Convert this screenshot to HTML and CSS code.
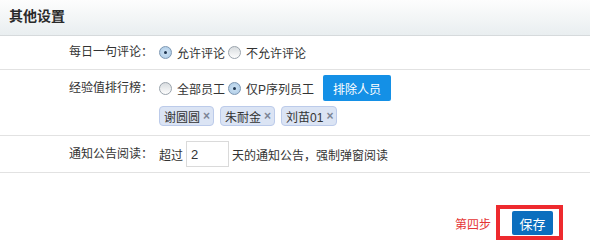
FILE: index.html
```html
<!DOCTYPE html>
<html>
<head>
    <title>其他设置</title>
    <link rel="stylesheet" href="styles.css">
</head>
<body>
    <div class="panel">
        <div class="panel-head">其他设置</div>

        <div class="row row-first">
            <div class="label">每日一句评论：</div>
            <div class="field">
                <div class="line">
                    <span class="radio on"></span><span class="opt">允许评论</span>
                    <span class="radio"></span><span class="opt">不允许评论</span>
                </div>
            </div>
        </div>

        <div class="row row-rank">
            <div class="label">经验值排行榜：</div>
            <div class="field">
                <div class="line">
                    <span class="radio"></span><span class="opt">全部员工</span>
                    <span class="radio on"></span><span class="opt">仅P序列员工</span>
                    <button class="btn-blue" type="button">排除人员</button>
                </div>
                <div class="tags">
                    <span class="tag">谢圆圆<span class="tag-x">×</span></span>
                    <span class="tag">朱耐金<span class="tag-x">×</span></span>
                    <span class="tag">刘苗01<span class="tag-x">×</span></span>
                </div>
            </div>
        </div>

        <div class="row">
            <div class="label">通知公告阅读：</div>
            <div class="field">
                <div class="line">
                    <span class="txt">超过</span>
                    <input class="days" type="text" value="2">
                    <span class="txt">天的通知公告，强制弹窗阅读</span>
                </div>
            </div>
        </div>

        <div class="footer">
            <span class="step">第四步</span>
            <div class="save-wrap">
                <button class="btn-save" type="button">保存</button>
                <div class="mark"></div>
            </div>
        </div>
    </div>
</body>
</html>
```

FILE: styles.css
```css
body {
    margin: 0;
    font-family: "Liberation Sans", "Noto Sans CJK SC", sans-serif;
    font-size: 12px;
    color: #333;
    background: #fff;
}
.panel {
    width: 590px;
}
.panel-head {
    height: 35px;
    line-height: 32px;
    padding-left: 9px;
    font-size: 14px;
    font-weight: bold;
    color: #2a2a2a;
    background: linear-gradient(#fdfdfd, #e9eef0);
    border-bottom: 1px solid #d6dadc;
}
.row {
    display: flex;
    padding: 5px 0;
    border-bottom: 1px solid #e2e2e2;
}
.row-first {
    padding: 3px 0 4px 0;
}
.row-rank {
    padding: 5px 0 9px 0;
}
.label {
    width: 153px;
    text-align: right;
    line-height: 26px;
    flex-shrink: 0;
}
.field {
    padding-left: 6px;
}
.line {
    display: flex;
    align-items: center;
    height: 26px;
}
.radio {
    width: 11px;
    height: 11px;
    border: 1px solid #9aa3ac;
    border-radius: 50%;
    background: linear-gradient(#d8dcdf, #fdfdfd);
    position: relative;
    flex-shrink: 0;
}
.radio.on {
    border-color: #7d97b3;
    background: radial-gradient(circle, #cfe3f4 0%, #a9c8e4 100%);
}
.radio.on::after {
    content: "";
    position: absolute;
    left: 4px;
    top: 4px;
    width: 3px;
    height: 3px;
    border-radius: 50%;
    background: #1f3550;
}
.opt {
    margin: 0 3px 0 5px;
}
.btn-blue {
    margin-left: 6px;
    height: 26px;
    width: 68px;
    border: none;
    border-radius: 2px;
    background: #1490e6;
    color: #fff;
    font-family: inherit;
    font-size: 12px;
    cursor: pointer;
}
.tags {
    display: flex;
    gap: 6px;
    margin-top: 5px;
}
.tag {
    display: flex;
    align-items: center;
    height: 18px;
    padding: 0 3px 0 4px;
    background: #dbe4f4;
    border: 1px solid #bccbea;
    border-radius: 4px;
}
.tag-x {
    margin-left: 3px;
    font-weight: bold;
    font-size: 12px;
    color: #7c8596;
}
.txt {
    margin-right: 3px;
}
.days {
    width: 43px;
    height: 26px;
    box-sizing: border-box;
    border: 1px solid #dadada;
    padding: 0 4px;
    margin: 0 3px 0 0;
    font-family: inherit;
    font-size: 13px;
    color: #333;
}
.footer {
    display: flex;
    justify-content: flex-end;
    align-items: center;
    padding: 38px 37px 13px 0;
}
.step {
    color: #e53535;
    margin-right: 21px;
}
.save-wrap {
    position: relative;
}
.btn-save {
    display: block;
    width: 41px;
    height: 24px;
    border: none;
    border-radius: 2px;
    background: #0b6ebe;
    color: #fff;
    font-family: inherit;
    font-size: 13px;
    cursor: pointer;
}
.mark {
    position: absolute;
    left: -16px;
    top: -6px;
    width: 59px;
    height: 27px;
    border: 4px solid #ee2a2e;
}
```
